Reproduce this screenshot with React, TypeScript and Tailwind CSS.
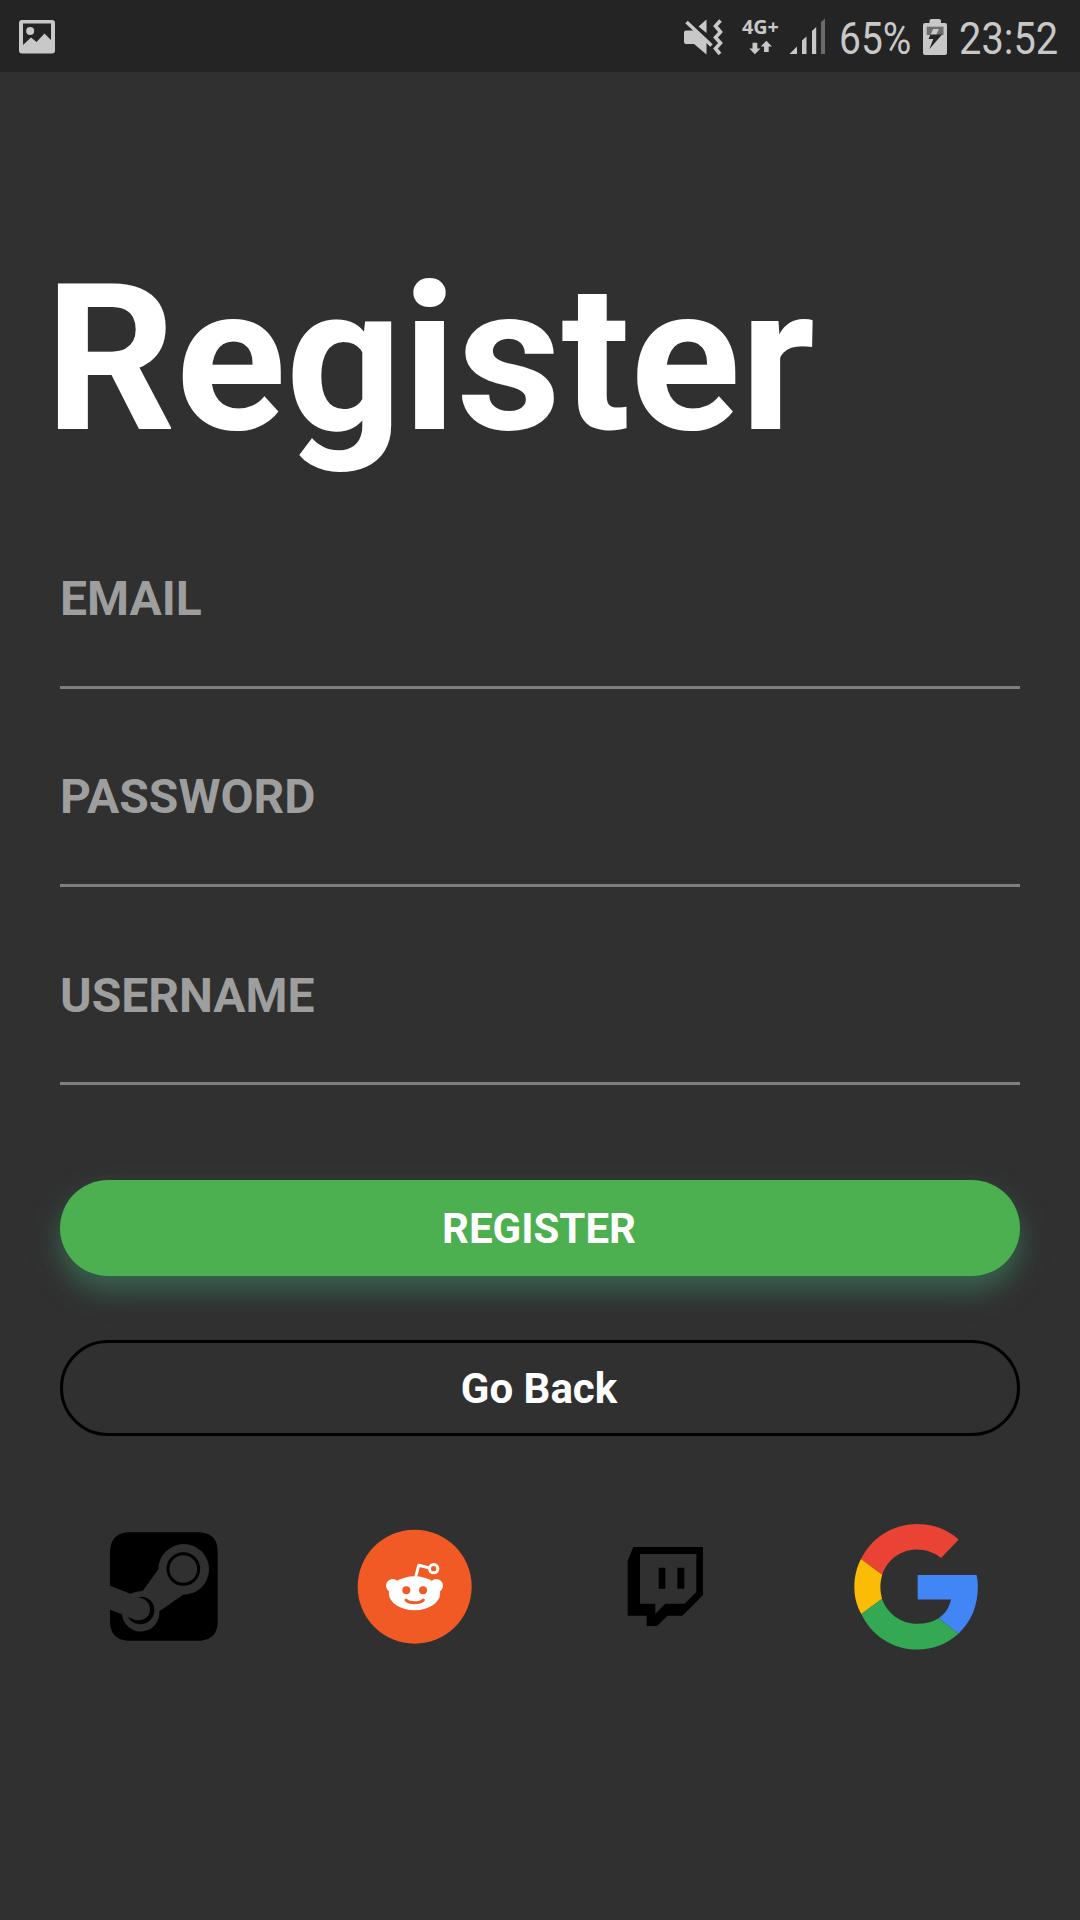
import React from "react";

function StatusBar() {
  return (
    <header className="relative h-[72px] bg-[#242424] text-[#c8c8c8]">
      <svg className="block h-[72px] w-[1080px]" viewBox="0 0 1080 72" fill="#c8c8c8">
        <path fillRule="evenodd" d="M22 20H52Q55 20 55 23V50.500Q55 53.500 52 53.500H22Q19 53.500 19 50.500V23Q19 20 22 20ZM23 23.500V45L31 37.500L36.500 42L44.500 33.500L51 40V23.500Z" />
        <circle cx="30.200" cy="31" r="4" />
        <path d="M684 32.500Q684 30.500 686 30.500H695.500L706.500 41V54.500L694 44H686Q684 44 684 42ZM706.500 19.500V33L698.500 26.500Z" />
        <path d="M686.500 22L711.500 45.500" stroke="#c8c8c8" strokeWidth="3.600" fill="none" />
        <path d="M720.500 20.500L715.500 26L720.500 32L715.500 37.500L720.500 43L715.500 48.500L720 54" stroke="#c8c8c8" strokeWidth="3.600" fill="none" />
        <path d="M752.500 42.700H757.300V48.500H760.500L754.900 54.300L749.300 48.500H752.500ZM764 52V46.500H760.700L766.300 40.700L772 46.500H768.700V52Z" />
        <path d="M797 46.500V54H789.500ZM802 40.500L806.500 36.500V54H802ZM812 31L816.200 27V54H812Z" />
        <path d="M821 22L825 18.500V54H821Z" fill="#6b6b6b" />
        <path d="M929.500 23V21Q929.500 19 931.500 19H939Q941 19 941 21V23H945Q947 23 947 25V53Q947 55 945 55H925Q923 55 923 53V25Q923 23 925 23Z" />
        <path d="M926.700 26.700H943.500V35H926.700Z" fill="#6e6e6e" />
        <path d="M933 29H939L936.500 34.500H942L929.300 49.300L933.300 39H928.500Z" fill="#242424" />
        <path d="M933 29H939L936.500 34.500H930.500Z" fill="#c8c8c8" />
      </svg>
      <span className="absolute left-[742px] top-[18px] origin-left scale-x-[1.04] text-[19px] leading-[19px] font-bold [font-family:'Open_Sans',sans-serif]">4G+</span>
      <span className="absolute left-[839px] top-[16px] origin-left scale-x-[0.865] text-[45px] leading-[45px] whitespace-nowrap">65%</span>
      <span className="absolute left-[959px] top-[16px] origin-left scale-x-[0.885] text-[45px] leading-[45px] whitespace-nowrap">23:52</span>
    </header>
  );
}

function Field({ label, className = "" }: { label: string; className?: string }) {
  return (
    <div className={"mb-[84px] h-[114px] border-b-[3px] border-[#7e7e7e] text-[48px] leading-[48px] font-bold text-[#9e9e9e] " + className}>
      {label}
    </div>
  );
}

function SteamIcon() {
  return (
    <svg className="h-[150px] w-[150px]" viewBox="0 0 450 450">
      <path d="M112 67H331Q383 72 383 125V335Q383 387 331 392H112Q60 387 60 335V299L96 313A56 56 0 0 0 208 304L280 254A76 76 0 1 0 205 178L158 243Q138 243 121 251L60 227V125Q62 72 112 67Z" />
      <circle cx="280" cy="177" r="46" fill="none" stroke="#000" strokeWidth="9" />
      <path d="M143 262C164 254 193 270 193 299C193 342 140 360 113 321L128 327C150 337 180 327 180 298C180 280 168 267 152 263Z" />
    </svg>
  );
}

function RedditIcon() {
  return (
    <svg className="ml-[100px] h-[150px] w-[150px]" viewBox="0 0 450 450">
      <circle cx="224" cy="230" r="171" fill="#f15a24" />
      <g fill="#fff">
        <circle cx="158" cy="227" r="20" />
        <circle cx="289" cy="227" r="20" />
        <ellipse cx="223.500" cy="250" rx="77" ry="51" />
      </g>
      <path d="M227 201L236 166L266 173" fill="none" stroke="#fff" strokeWidth="9" strokeLinejoin="round" />
      <circle cx="281" cy="176" r="12.500" fill="none" stroke="#fff" strokeWidth="9" />
      <circle cx="199" cy="241" r="12" fill="#f15a24" />
      <circle cx="249" cy="241" r="12" fill="#f15a24" />
      <path d="M198 270C208 281 239 281 250 270" fill="none" stroke="#f15a24" strokeWidth="9" strokeLinecap="round" />
    </svg>
  );
}

function TwitchIcon() {
  return (
    <svg className="ml-[110px] h-[130px] w-[130px]" viewBox="0 0 390 390">
      <path fillRule="evenodd" d="M100 81H309V225L247 287H203L171 318H140V287H83V122ZM120 102V251H166V281L196 251H254L289 216V102Z" />
      <path d="M176 143H196V206H176ZM232 143H253V206H232Z" />
    </svg>
  );
}

function GoogleIcon() {
  return (
    <svg className="ml-[110px] h-[150px] w-[150px]" viewBox="0 0 450 450">
      <g transform="translate(43 42) scale(7.85)">
        <path fill="#ea4335" d="M24 9.700c3.400 0 6.600 1.150 9.150 3.250l6.750-7.050C35.700 2.200 30.200 0 24 0 14.620 0 6.510 5.380 2.560 13.370l8.100 6C12.430 13.720 17.740 9.700 24 9.700z" />
        <path fill="#4285f4" d="M47.200 24c0-1.570-.17-3.090-.5-4.500H24.200v9.320h12.750c-.58 2.960-2.260 5.480-4.780 7.180l7.600 5.950c4.900-4.600 7.430-10.660 7.430-17.950z" />
        <path fill="#fbbc05" d="M10.600 28.590c-.4-1.450-.65-2.990-.65-4.590s.27-3.140.7-4.630l-8.100-6C.92 16.460 0 20.120 0 24c0 3.880.92 7.400 2.700 10.400z" />
        <path fill="#34a853" d="M24 48c6.100 0 11.500-2.250 15.770-6.050l-7.600-5.950c-2.150 1.450-4.920 2.150-8.170 2.150-6.260 0-11.570-4-13.400-9.560L2.700 34.400C6.510 42.620 14.620 48 24 48z" />
      </g>
    </svg>
  );
}

export default function App() {
  return (
    <div className="h-[1920px] w-[1080px] overflow-hidden bg-[#303030] [font-family:Roboto,sans-serif]">
      <StatusBar />
      <h1 className="mt-[186px] ml-[45px] text-[204px] leading-[204px] font-bold text-white">Register</h1>
      <main className="mt-[113px] flex flex-col px-[60px]">
        <Field label="EMAIL" />
        <Field label="PASSWORD" />
        <Field label="USERNAME" className="pt-px" />
        <button className="mt-[10.5px] flex h-[96px] w-full items-center justify-center rounded-full bg-[#4caf50] pt-[2px] pr-[2px] text-[42px] font-bold text-white shadow-[0_14px_28px_rgba(60,120,92,0.75)]">
          REGISTER
        </button>
        <button className="mt-[64px] flex h-[96px] w-full items-center justify-center rounded-full border-[3px] border-black pt-[2px] pr-[2px] text-[42px] font-bold text-white">
          Go Back
        </button>
      </main>
      <nav className="mt-[74.5px] flex items-center pl-[90px]">
        <SteamIcon />
        <RedditIcon />
        <TwitchIcon />
        <GoogleIcon />
      </nav>
    </div>
  );
}
